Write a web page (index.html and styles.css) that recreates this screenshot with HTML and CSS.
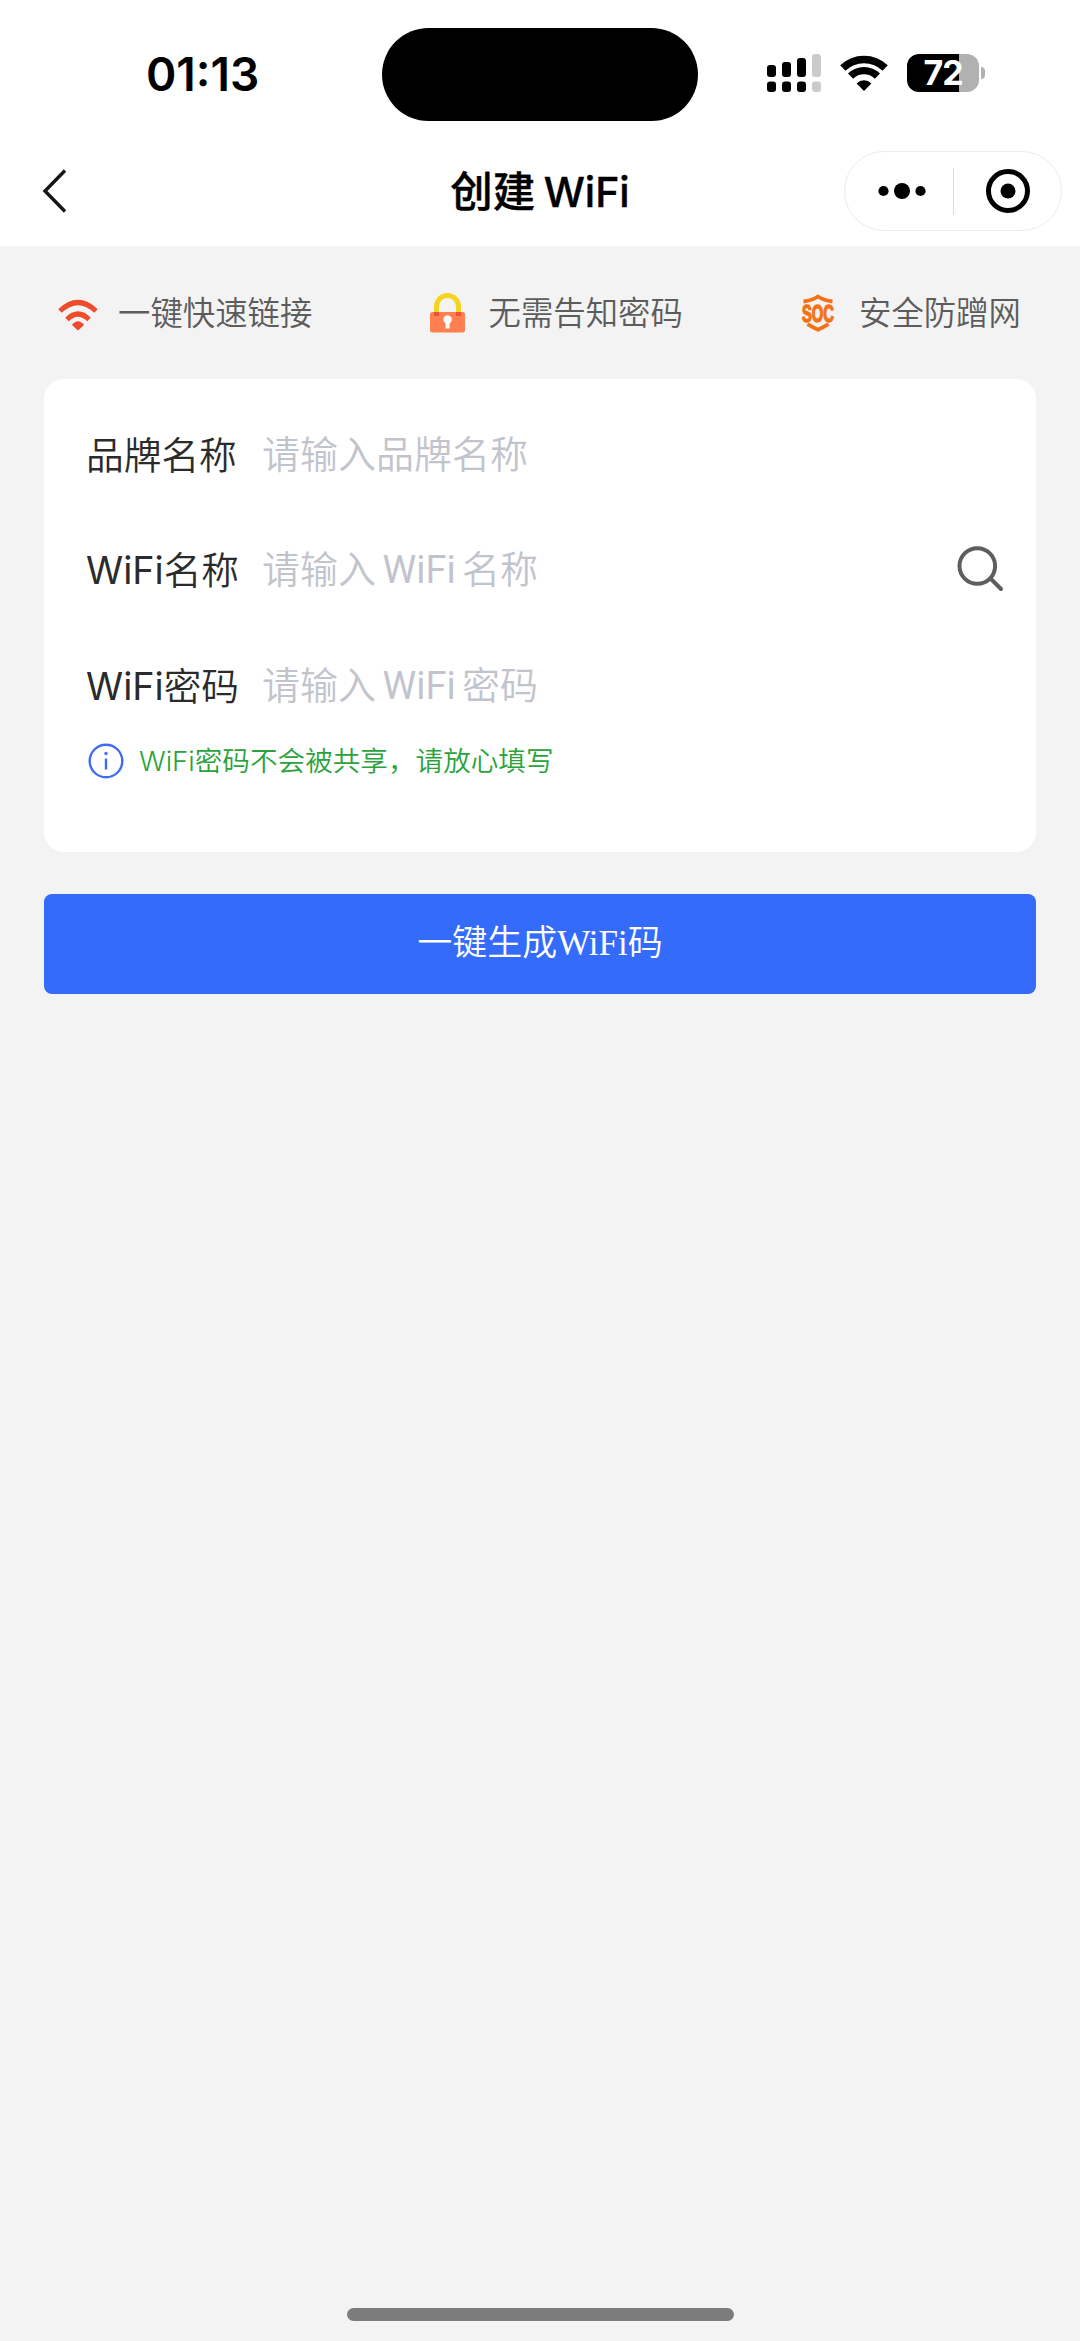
FILE: index.html
```html
<!DOCTYPE html>
<html lang="zh-CN">
<head>
    <meta charset="UTF-8">
    <meta name="viewport" content="width=device-width, initial-scale=1.0">
    <title>创建 WiFi</title>
    <link rel="stylesheet" href="styles.css">
</head>
<body>
    <div class="page">
        <header class="header">
            <div class="status-bar">
                <div class="time">01:13</div>
                <div class="island"></div>
                <div class="status-icons">
                    <svg class="signal" width="54" height="38" viewBox="0 0 54 38">
                        <g fill="#000">
                            <rect x="0" y="11" width="9" height="12" rx="3"/>
                            <rect x="15" y="8" width="9" height="15" rx="3"/>
                            <rect x="30" y="4" width="9" height="19" rx="3"/>
                            <rect x="0" y="27.5" width="9" height="10.5" rx="3"/>
                            <rect x="15" y="27.5" width="9" height="10.5" rx="3"/>
                            <rect x="30" y="27.5" width="9" height="10.5" rx="3"/>
                        </g>
                        <g fill="#cbcbcb">
                            <rect x="45" y="0" width="9" height="23" rx="3"/>
                            <rect x="45" y="27.5" width="9" height="10.5" rx="3"/>
                        </g>
                    </svg>
                    <svg class="wifi" width="48" height="36" viewBox="0 0 48 36">
                        <g fill="none" stroke="#000" stroke-width="7.4">
                            <path d="M2.8 13A30.5 30.5 0 0 1 45.2 13"/>
                            <path d="M10.6 21.2A19 19 0 0 1 37.4 21.2"/>
                        </g>
                        <path d="M24 36L16.6 28.4A10.5 10.5 0 0 1 31.4 28.4Z"/>
                    </svg>
                    <div class="battery">
                        <div class="battery-body">72</div>
                        <div class="battery-cap"></div>
                    </div>
                </div>
            </div>
            <div class="nav-bar">
                <svg class="back" width="26" height="46" viewBox="0 0 26 46">
                    <path d="M23 2.5L3 23L23 43.5" fill="none" stroke="#161616" stroke-width="3.4"/>
                </svg>
                <h1 class="title">创建 <span>WiFi</span></h1>
                <div class="capsule">
                    <svg width="50" height="18" viewBox="0 0 50 18">
                        <circle cx="6.5" cy="9" r="5.1"/>
                        <circle cx="25" cy="9" r="8"/>
                        <circle cx="43.5" cy="9" r="5.1"/>
                    </svg>
                    <div class="capsule-line"></div>
                    <svg width="46" height="46" viewBox="0 0 46 46">
                        <circle cx="23" cy="23" r="19.5" fill="none" stroke="#000" stroke-width="5"/>
                        <circle cx="23" cy="23" r="7.5"/>
                    </svg>
                </div>
            </div>
        </header>

        <main class="main">
            <div class="features">
                <div class="feature">
                    <svg width="40" height="40" viewBox="0 0 40 40">
                        <g fill="none" stroke="#ed4b2b" stroke-width="5">
                            <path d="M2 18Q20 1 38 18"/>
                            <path d="M9 26.5Q20 15.5 31 26.5"/>
                        </g>
                        <path d="M20 37.5L14 32Q20 24.5 26 32Z" fill="#ed4b2b"/>
                    </svg>
                    <span>一键快速链接</span>
                </div>
                <div class="feature">
                    <svg width="40" height="40" viewBox="0 0 40 40">
                        <path d="M7.5 22V13.5a11 11 0 0 1 22 0V22" fill="none" stroke="#f5d31f" stroke-width="5"/>
                        <rect x="1" y="19" width="35" height="20.5" rx="2.5" fill="#ff7f50"/>
                        <path d="M5 19h5v4h-5zM27 19h5v4h-5z" fill="#ea5535"/>
                        <path d="M16.6 35.5v-5.2a4.3 4.3 0 1 1 4 0V35.5z" fill="#fff"/>
                    </svg>
                    <span>无需告知密码</span>
                </div>
                <div class="feature">
                    <svg class="shield" width="40" height="40" viewBox="0 0 40 40">
                        <g fill="none" stroke="#f47215" stroke-width="3.8">
                            <path d="M4.5 8.5Q13 7.5 19 3.5Q25 7.500 33.5 8.5"/>
                            <path d="M8.5 31.2Q13 34 19 36.7Q25 34 29.5 31.2"/>
                        </g>
                        <text class="soc" x="19" y="28.5" text-anchor="middle" textLength="32" lengthAdjust="spacingAndGlyphs">SOC</text>
                    </svg>
                    <span>安全防蹭网</span>
                </div>
            </div>

            <form class="card">
                <div class="row">
                    <label for="brand">品牌名称</label>
                    <input id="brand" type="text" placeholder="请输入品牌名称">
                </div>
                <div class="row">
                    <label for="ssid">WiFi名称</label>
                    <input id="ssid" type="text" placeholder="请输入 WiFi 名称">
                    <svg class="search" width="48" height="48" viewBox="0 0 48 48">
                        <g fill="none" stroke="#5e5e5e" stroke-width="4">
                            <circle cx="21.3" cy="20" r="17.8"/>
                            <path d="M34.5 32.5L45 43" stroke-linecap="round"/>
                        </g>
                    </svg>
                </div>
                <div class="row">
                    <label for="password">WiFi密码</label>
                    <input id="password" type="text" placeholder="请输入 WiFi 密码">
                </div>
                <div class="tip">
                    <svg width="36" height="36" viewBox="0 0 36 36">
                        <circle cx="18" cy="18" r="16.3" fill="none" stroke="#3f6cf5" stroke-width="2.4"/>
                        <circle cx="18" cy="10.5" r="1.7" fill="#3f6cf5"/>
                        <path d="M18 15.5V26.5" stroke="#3f6cf5" stroke-width="2.4"/>
                    </svg>
                    <span>WiFi密码不会被共享，请放心填写</span>
                </div>
            </form>

            <button class="submit" type="button">一键生成WiFi码</button>
        </main>

        <div class="home-indicator"></div>
    </div>
</body>
</html>
```
FILE: styles.css
```css
* {
    box-sizing: border-box;
}

body {
    margin: 0;
    background-color: #f3f3f3;
    font-family: Inter, 'Noto Sans CJK SC', sans-serif;
    color: #2b2b2b;
}

.page {
    display: flex;
    flex-direction: column;
    height: 2341px;
    overflow: hidden;
}

.header {
    height: 246px;
    background-color: #fff;
}

/* status bar */
.status-bar {
    display: grid;
    grid-template-columns: 382px 316px 1fr;
    height: 136px;
    padding-top: 28px;
}

.time {
    padding-left: 146px;
    font-size: 46px;
    font-weight: 600;
    line-height: 92px;
    color: #000;
}

.island {
    height: 93px;
    border-radius: 47px;
    background-color: #000;
}

.status-icons {
    display: flex;
    align-items: flex-start;
    padding: 26px 0 0 69px;
}

.wifi {
    margin: 1px 19px 0 19px;
}

.battery {
    display: flex;
    align-items: center;
    gap: 2px;
}

.battery-body {
    width: 72px;
    height: 38px;
    border-radius: 12px;
    background: linear-gradient(90deg, #000 52px, #b1b1b1 52px);
    color: #fff;
    font-size: 34px;
    font-weight: 700;
    line-height: 38px;
    text-align: center;
    letter-spacing: -1px;
}

.battery-cap {
    width: 4px;
    height: 12px;
    border-radius: 0 4px 4px 0;
    background-color: #b1b1b1;
}

/* navigation bar */
.nav-bar {
    display: grid;
    grid-template-columns: 300px 1fr 300px;
    align-items: center;
    height: 110px;
}

.back {
    margin-left: 42px;
}

.title {
    margin: 0;
    padding-top: 1px;
    font-size: 42.5px;
    font-weight: 500;
    line-height: 60px;
    text-align: center;
    word-spacing: -3px;
    color: #000;
    -webkit-text-stroke: 0.4px #000;
}

.title span {
    font-size: 41px;
}

.capsule {
    display: flex;
    align-items: center;
    width: 218px;
    height: 80px;
    margin-left: 64px;
    padding-left: 32px;
    border: 1px solid #ececec;
    border-radius: 40px;
}

.capsule-line {
    width: 1px;
    height: 47px;
    margin: 0 31px 0 26px;
    background-color: #dcdcdc;
}

/* content */
.main {
    padding: 0 44px;
}

.features {
    display: flex;
    justify-content: space-between;
    height: 133px;
    padding: 47px 15px 0 14px;
}

.feature {
    display: flex;
    gap: 20px;
    height: 44px;
    font-size: 32.4px;
    font-weight: 350;
    line-height: 42px;
    color: #5c5c5c;
}

.shield {
    overflow: visible;
}

.soc {
    font-family: 'Liberation Sans', sans-serif;
    font-size: 23.5px;
    font-weight: 700;
    line-height: 1;
    fill: #f47215;
    stroke: #f47215;
    stroke-width: 1.4px;
}

.card {
    height: 473px;
    padding: 18px 32px 0 42px;
    border-radius: 20px;
    background-color: #fff;
}

.row {
    display: flex;
    align-items: center;
    height: 115.5px;
    font-family: Inter, 'Noto Sans CJK SC DemiLight', 'Noto Sans CJK SC', sans-serif;
    font-size: 37.7px;
    font-weight: 400;
}

.row label {
    width: 176px;
    line-height: 60px;
    white-space: nowrap;
}

.row input {
    flex: 1;
    min-width: 0;
    height: 60px;
    padding: 0;
    border: none;
    outline: none;
    background: none;
    font-family: Roboto, 'Noto Sans CJK SC DemiLight', 'Noto Sans CJK SC', sans-serif;
    font-size: 38px;
    word-spacing: -3px;
}

.row input::placeholder {
    color: #c2c4cd;
    opacity: 1;
}

.tip {
    display: flex;
    align-items: center;
    gap: 15px;
    height: 38px;
    margin-top: -2px;
    padding-left: 2px;
    font-size: 27.6px;
    font-weight: 350;
    line-height: 34px;
    color: #2aa33c;
}

.submit {
    display: block;
    width: 100%;
    height: 100px;
    margin-top: 42px;
    padding: 0;
    border: none;
    border-radius: 8px;
    background-color: #356bfa;
    color: #fff;
    font-family: 'Liberation Serif', 'Noto Sans CJK SC', serif;
    font-size: 35px;
    font-weight: 350;
    line-height: 96px;
}

.home-indicator {
    flex-shrink: 0;
    width: 387px;
    height: 13px;
    margin: auto auto 20px;
    border-radius: 7px;
    background-color: #7c7c7c;
}
```
